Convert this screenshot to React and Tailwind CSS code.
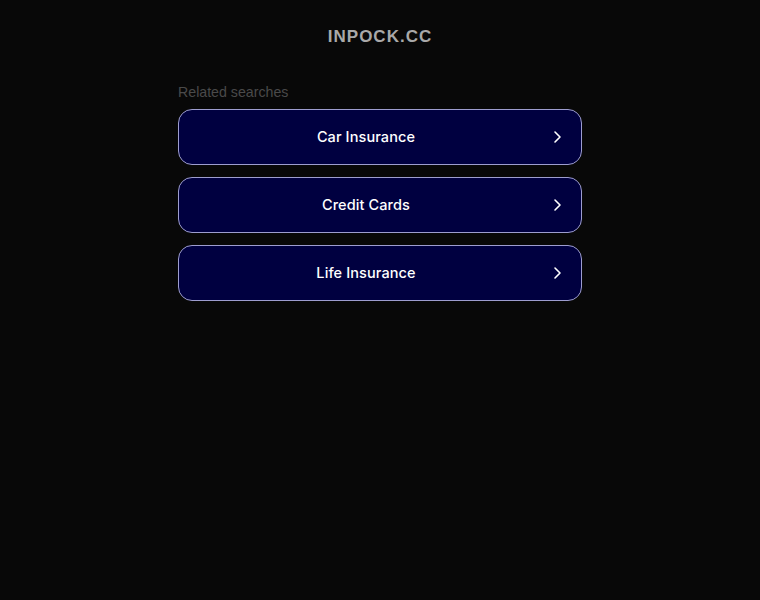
const items = ['Car Insurance', 'Credit Cards', 'Life Insurance'];

const Chevron = () => (
  <svg className="h-4 w-4 text-white" viewBox="0 0 16 16" fill="none" stroke="currentColor" strokeWidth="1.6" strokeLinecap="round" strokeLinejoin="round">
    <path d="M6 3l5 5-5 5" />
  </svg>
);

export default function App() {
  return (
    <div className="min-h-[600px] w-full bg-[#080808] font-['Liberation_Sans',Arial,sans-serif]">
      <div className="pt-[27px] text-center text-[17px] font-bold leading-[20px] tracking-[1px] text-[#a9a9a9]">
        INPOCK.CC
      </div>
      <div className="mx-auto mt-[34px] w-[404px]">
        <div className="text-[14.2px] leading-[22px] text-[#4a4a4a]">Related searches</div>
        <div className="mt-[6px] flex flex-col gap-[12px]">
          {items.map((label) => (
            <div
              key={label}
              className="flex h-[56px] items-center rounded-[14px] border border-[#9d9dcf] bg-[#000040] pl-[4px] pr-[16px]"
            >
              <span className="flex-1 text-center font-['Inter',sans-serif] text-[14.5px] font-medium tracking-[0.1px] text-white">{label}</span>
              <Chevron />
            </div>
          ))}
        </div>
      </div>
    </div>
  );
}
